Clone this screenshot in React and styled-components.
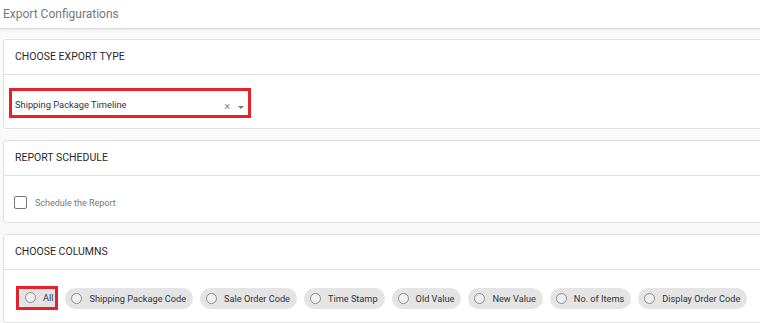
import React from "react";
import styled, { createGlobalStyle } from "styled-components";

const GlobalStyle = createGlobalStyle`
  html, body {
    margin: 0;
    padding: 0;
    background: #f9f9f9;
    font-family: Roboto, "Liberation Sans", Arial, sans-serif;
    overflow: hidden;
  }
`;

const TopBar = styled.div`
  height: 28px;
  display: flex;
  align-items: center;
  padding-left: 3px;
  background: #ffffff;
  border-bottom: 1px solid #dcdcdc;
  box-shadow: 0 1px 2px rgba(0, 0, 0, 0.08);
  color: #777;
  font-size: 12px;
`;

const Content = styled.div`
  display: flex;
  flex-direction: column;
  gap: 11px;
  padding: 10px 0 0 3px;
  margin-right: -12px;
`;

const Card = styled.section`
  background: #ffffff;
  border: 1px solid #e0e0e0;
  border-radius: 3px;
`;

const CardHeader = styled.div`
  height: 35px;
  box-sizing: border-box;
  display: flex;
  align-items: center;
  padding: 0 0 2px 11px;
  border-bottom: 1px solid #e0e0e0;
  color: #2a2a2a;
  font-size: 10.5px;
  text-transform: uppercase;
`;

const CardBody = styled.div`
  padding: ${(p) => p.$pad};
  display: flex;
  align-items: center;
  flex-wrap: wrap;
  gap: ${(p) => p.$gap || "0"};
`;

const Highlight = styled.div`
  border: 3px solid #e8202a;
  display: inline-flex;
  overflow: hidden;
`;

const SelectBox = styled.div`
  width: 236px;
  height: 24px;
  display: flex;
  align-items: center;
  padding-left: 3px;
  font-size: 9.3px;
  color: #333;
  box-sizing: border-box;
`;

const SelectValue = styled.span`
  flex: 1;
  margin-top: 3px;
`;

const ClearMark = styled.span`
  color: #888;
  font-size: 11px;
  margin-top: 7px;
  margin-right: 8px;
`;

const Caret = styled.span`
  width: 0;
  height: 0;
  border-left: 3px solid transparent;
  border-right: 3px solid transparent;
  border-top: 3px solid #777;
  margin-top: 9px;
  margin-right: 4px;
`;

const CheckRow = styled.label`
  display: flex;
  align-items: center;
  gap: 8px;
  color: #777;
  font-size: 9px;
`;

const CheckBox = styled.span`
  width: 11px;
  height: 11px;
  border: 1px solid #777;
  border-radius: 2px;
`;

const Chip = styled.div`
  height: 21px;
  display: inline-flex;
  align-items: center;
  gap: 7px;
  padding: 0 7px 0 6px;
  border-radius: 11px;
  background: #e4e4e4;
  color: #333;
  font-size: 9.2px;
  white-space: nowrap;
  margin: ${(p) => p.$margin || "0"};
`;

const Radio = styled.span`
  width: 9px;
  height: 9px;
  border: 1px solid #8a8a8a;
  border-radius: 50%;
  background: #f0f0f0;
`;

const columns = [
  "Shipping Package Code",
  "Sale Order Code",
  "Time Stamp",
  "Old Value",
  "New Value",
  "No. of Items",
  "Display Order Code",
];

export default function App() {
  return (
    <>
      <GlobalStyle />
      <TopBar>Export Configurations</TopBar>
      <Content>
        <Card>
          <CardHeader>Choose Export Type</CardHeader>
          <CardBody $pad="13px 0 10px 5px">
            <Highlight>
              <SelectBox>
                <SelectValue>Shipping Package Timeline</SelectValue>
                <ClearMark>×</ClearMark>
                <Caret />
              </SelectBox>
            </Highlight>
          </CardBody>
        </Card>
        <Card>
          <CardHeader>Report Schedule</CardHeader>
          <CardBody $pad="20px 0 13px 10px">
            <CheckRow>
              <CheckBox />
              Schedule the Report
            </CheckRow>
          </CardBody>
        </Card>
        <Card>
          <CardHeader>Choose Columns</CardHeader>
          <CardBody $pad="16px 0 12px 12px" $gap="7px">
            <Highlight>
              <Chip $margin="-2px -5px -1px 0">
                <Radio />
                All
              </Chip>
            </Highlight>
            {columns.map((c) => (
              <Chip key={c}>
                <Radio />
                {c}
              </Chip>
            ))}
          </CardBody>
        </Card>
      </Content>
    </>
  );
}
